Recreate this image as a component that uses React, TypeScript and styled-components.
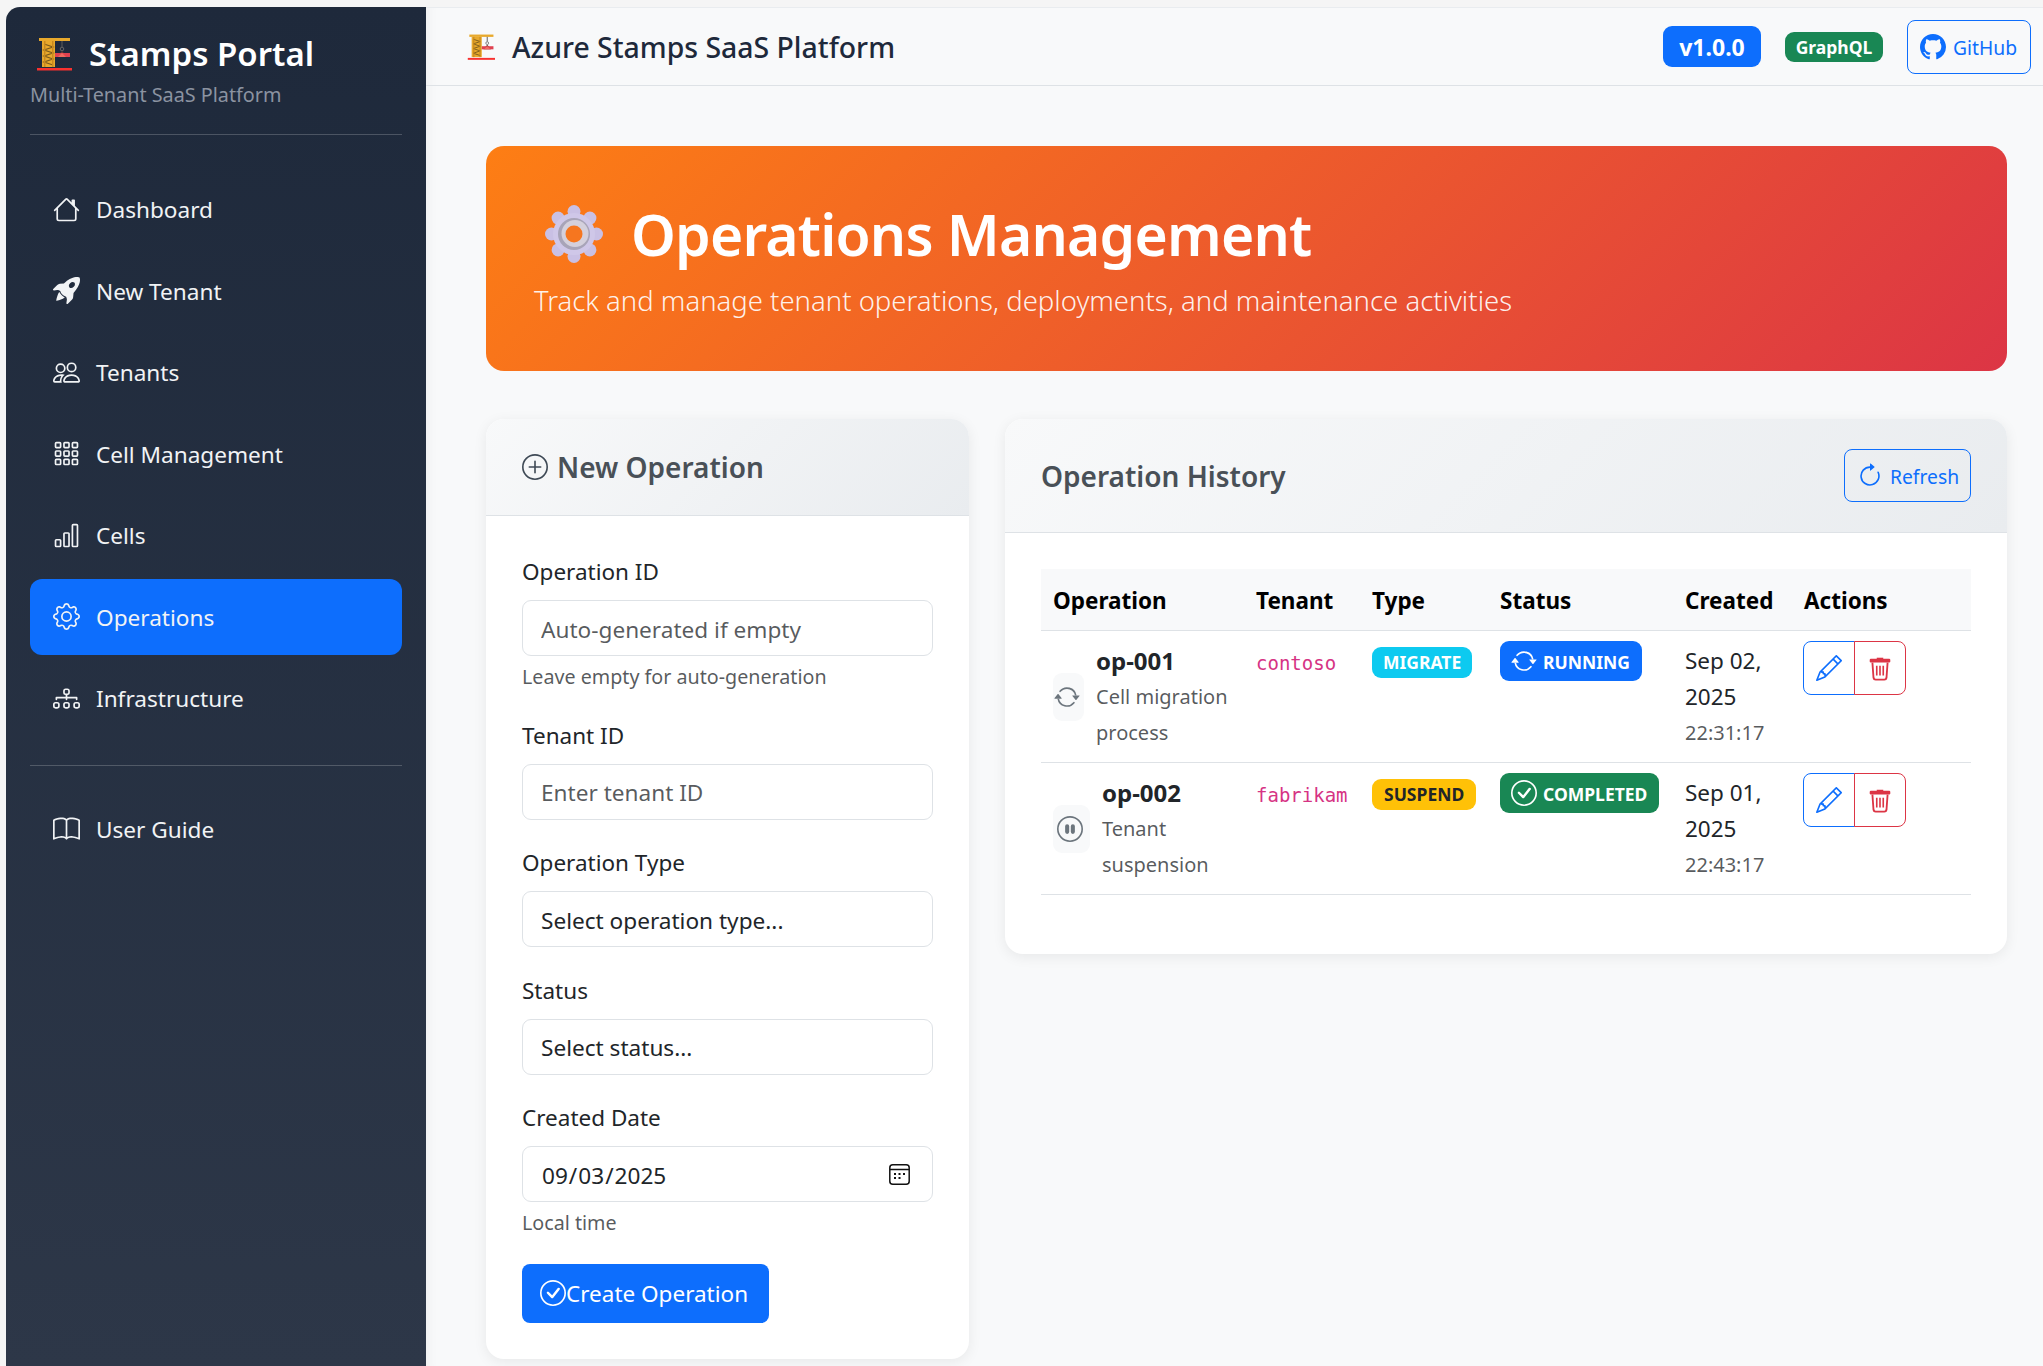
import styled, { createGlobalStyle } from "styled-components";
import {
  BsArrowClockwise,
  BsArrowRepeat,
  BsBarChart,
  BsBook,
  BsCheckCircle,
  BsDiagram3,
  BsGear,
  BsGithub,
  BsGrid3X3Gap,
  BsHouse,
  BsPauseCircle,
  BsPencil,
  BsPeople,
  BsPlusCircle,
  BsRocketTakeoffFill,
} from "react-icons/bs";

const FONT = `"Noto Sans", "Open Sans", sans-serif`;

const CALENDAR_ICON =
  "data:image/svg+xml,%3Csvg xmlns='http://www.w3.org/2000/svg' viewBox='0 0 21 21'%3E%3Crect x='.8' y='.8' width='19.4' height='19.4' rx='3' fill='none' stroke='%23111' stroke-width='1.5'/%3E%3Cpath d='M1 5.5h19' stroke='%23111' stroke-width='1.3'/%3E%3Cg fill='%23111'%3E%3Crect x='5' y='9' width='2' height='2'/%3E%3Crect x='9.5' y='9' width='2' height='2'/%3E%3Crect x='14' y='9' width='2' height='2'/%3E%3Crect x='5' y='13' width='2' height='2'/%3E%3Crect x='9.5' y='13' width='2' height='2'/%3E%3C/g%3E%3C/svg%3E";

const GlobalStyle = createGlobalStyle`
  * { box-sizing: border-box; }
  html, body { margin: 0; padding: 0; background: #f5f5f5; }
  body { font-family: ${FONT}; color: #212529; font-size: 22.5px; line-height: 36px; }
`;

const Page = styled.div`
  display: flex;
  height: 1366px;
  padding: 7px 0 0 6px;
  overflow: hidden;
`;

const Sidebar = styled.aside`
  width: 420px;
  flex-shrink: 0;
  padding: 24px;
  background: linear-gradient(180deg, #1e293b 0%, #2d3748 100%);
  border-top-left-radius: 14px;
  color: #fff;
`;

const Brand = styled.div`
  display: flex;
  align-items: center;
  gap: 17px;
  padding-left: 6px;
  font-size: 33px;
  line-height: 46px;
  font-weight: 600;
`;

const BrandSub = styled.div`
  margin-top: 3px;
  font-size: 19.8px;
  line-height: 30px;
  color: #8b93a1;
`;

const Divider = styled.hr`
  margin: ${(p: { $top: number; $bottom: number }) => `${p.$top}px 0 ${p.$bottom}px`};
  border: 0;
  border-top: 1px solid rgba(255, 255, 255, 0.2);
`;

const NavList = styled.nav`
  display: flex;
  flex-direction: column;
  gap: 5.5px;
`;

const NavItem = styled.a<{ $active?: boolean }>`
  display: flex;
  align-items: center;
  gap: 16px;
  height: 76px;
  padding: 2px 23px 0;
  border-radius: 12px;
  font-size: 22.6px;
  color: #f1f3f5;
  background: ${(p) => (p.$active ? "#0d6efd" : "transparent")};
  svg {
    width: 27px;
    height: 27px;
    flex-shrink: 0;
    margin-top: -2px;
  }
`;

const Main = styled.main`
  flex: 1;
  min-width: 0;
  background: #f8f9fa;
  box-shadow: inset 14px 0 14px -14px rgba(0, 0, 0, 0.06);
  border-top: 1px solid #e9ecef;
`;

const TopBar = styled.header`
  display: flex;
  align-items: center;
  height: 78px;
  padding: 0 12px 0 41px;
  border-bottom: 1px solid #dee2e6;
`;

const TopTitle = styled.div`
  display: flex;
  align-items: center;
  gap: 17px;
  flex: 1;
  font-size: 28.4px;
  font-weight: 500;
  color: #1e293b;
`;

const TopBadge = styled.span<{ $color: string; $big?: boolean }>`
  display: inline-flex;
  align-items: center;
  justify-content: center;
  width: 98px;
  height: ${(p) => (p.$big ? "41px" : "30px")};
  margin-right: 24px;
  border-radius: 9px;
  background: ${(p) => p.$color};
  color: #fff;
  font-weight: 700;
  font-size: ${(p) => (p.$big ? "23px" : "17.5px")};
`;

const OutlineButton = styled.a`
  display: inline-flex;
  align-items: center;
  gap: 7px;
  border: 1.3px solid #0d6efd;
  border-radius: 8px;
  color: #0d6efd;
  font-size: 19.3px;
  svg {
    width: 26px;
    height: 26px;
  }
`;

const ButtonText = styled.span`
  padding-top: 3px;
`;

const GithubButton = styled(OutlineButton)`
  height: 54px;
  width: 124px;
  padding-left: 12px;
`;

const RefreshButton = styled(OutlineButton)`
  height: 53px;
  width: 127px;
  padding-left: 12px;
`;

const Content = styled.div`
  padding: 60px 36px 0 60px;
`;

const Hero = styled.section`
  height: 225px;
  padding: 50px 48px 0;
  border-radius: 18px;
  background: linear-gradient(135deg, #fd7e14 0%, #dc3545 100%);
  color: #fff;
`;

const HeroTitle = styled.h1`
  display: flex;
  align-items: center;
  gap: 28px;
  margin: 0 0 0 11px;
  font-size: 57px;
  line-height: 76px;
  font-weight: 600;
  letter-spacing: -0.8px;
`;

const HeroText = styled.p`
  margin: 9px 0 0;
  font-size: 27.5px;
  line-height: 40px;
  font-weight: 300;
  color: rgba(255, 255, 255, 0.92);
`;

const Columns = styled.div`
  display: flex;
  align-items: flex-start;
  gap: 36px;
  margin-top: 48px;
`;

const Card = styled.section<{ $width?: string }>`
  flex: ${(p) => p.$width ?? "1"};
  border-radius: 18px;
  background: #fff;
  overflow: hidden;
  box-shadow: 0 3px 14px rgba(0, 0, 0, 0.07);
`;

const CardHead = styled.div<{ $height: number }>`
  display: flex;
  align-items: center;
  justify-content: space-between;
  height: ${(p) => p.$height}px;
  padding: 0 36px;
  background: linear-gradient(135deg, #f8f9fa 0%, #e9ecef 100%);
  border-bottom: 1px solid #dee2e6;
`;

const CardTitle = styled.h2`
  display: flex;
  align-items: center;
  gap: 9px;
  margin: 0;
  font-size: 28px;
  line-height: 40px;
  font-weight: 600;
  color: #495057;
  svg {
    width: 26px;
    height: 26px;
    color: #3f4a56;
  }
`;

const FormBody = styled.form`
  padding: 38px 36px 36px;
`;

const Field = styled.div`
  margin-bottom: 25.5px;
`;

const Label = styled.label`
  display: block;
  margin-bottom: 10px;
`;

const inputCss = `
  display: block;
  width: 100%;
  height: 56px;
  padding: 2px 22px 0 18px;
  border: 1.3px solid #dee2e6;
  border-radius: 9px;
  background: #fff;
  font-family: ${FONT};
  font-size: 22.6px;
  color: #212529;
  outline: none;
  appearance: none;
`;

const TextInput = styled.input`
  ${inputCss}
  &::placeholder {
    color: rgba(33, 37, 41, 0.75);
  }
  &::-webkit-calendar-picker-indicator {
    width: 21px;
    height: 21px;
    padding: 0;
    margin: -2px 0 0;
    background: url("${CALENDAR_ICON}") center / 21px 21px no-repeat;
  }
`;

const SelectInput = styled.select`
  ${inputCss}
`;

const Help = styled.div`
  margin-top: 6px;
  font-size: 19.7px;
  line-height: 30px;
  color: rgba(33, 37, 41, 0.75);
`;

const SubmitButton = styled.button`
  display: inline-flex;
  align-items: center;
  width: 247px;
  height: 59px;
  padding: 0 18px;
  border: 0;
  border-radius: 8px;
  background: #0d6efd;
  color: #fff;
  font-family: ${FONT};
  font-size: 22.5px;
  svg {
    width: 26px;
    height: 26px;
  }
`;

const TableWrap = styled.div`
  padding: 36px 36px 59px;
`;

const Table = styled.table`
  width: 100%;
  table-layout: fixed;
  border-collapse: collapse;
  th {
    height: 61px;
    padding: 3px 12px 0;
    text-align: left;
    font-weight: 700;
    font-size: 22.5px;
    color: #000;
    background: #f8f9fa;
    border-bottom: 1.3px solid #dee2e6;
  }
  td {
    padding: 12px 12px 10px;
    vertical-align: top;
    border-bottom: 1.3px solid #dee2e6;
  }
`;

const OpCell = styled.div`
  display: flex;
  align-items: center;
  gap: 12px;
`;

const OpIcon = styled.span<{ $width: number }>`
  display: flex;
  align-items: center;
  justify-content: center;
  flex-shrink: 0;
  width: ${(p) => p.$width}px;
  height: 48px;
  padding-right: 4px;
  border-radius: 9px;
  background: #f8f9fa;
  color: #6c757d;
  svg {
    width: 26px;
    height: 26px;
    flex-shrink: 0;
  }
`;

const OpName = styled.div`
  font-weight: 700;
  font-size: 24px;
  color: #212529;
`;

const Muted = styled.div`
  color: rgba(33, 37, 41, 0.75);
  font-size: 20px;
  line-height: 36.5px;
`;

const Code = styled.code`
  font-family: "DejaVu Sans Mono", monospace;
  font-size: 19px;
  line-height: 40px;
  color: #d63384;
`;

const Pill = styled.span<{ $bg: string; $fg?: string }>`
  display: inline-flex;
  align-items: center;
  gap: 6px;
  margin-top: 4px;
  height: 31px;
  padding: 0 ${(p) => (p.$fg ? "12px" : "11px")};
  border-radius: 9px;
  background: ${(p) => p.$bg};
  color: ${(p) => p.$fg ?? "#fff"};
  font-weight: 700;
  font-size: 17.5px;
`;

const StatusPill = styled(Pill)`
  margin-top: -2px;
  height: 40px;
  padding: 0 12px 0 11px;
  svg {
    width: 26px;
    height: 26px;
  }
`;

const DateText = styled.div`
  font-size: 22.5px;
`;

const ButtonGroup = styled.div`
  display: flex;
  width: 103px;
  margin: -2px 0 0 -1px;
`;

const IconButton = styled.span<{ $color: string; $first?: boolean }>`
  display: flex;
  align-items: center;
  justify-content: center;
  width: 52px;
  height: 54px;
  margin-left: ${(p) => (p.$first ? "0" : "-1px")};
  border: 1.3px solid ${(p) => p.$color};
  border-radius: ${(p) => (p.$first ? "8px 0 0 8px" : "0 8px 8px 0")};
  color: ${(p) => p.$color};
  svg {
    width: 26px;
    height: 26px;
  }
`;

const Crane = ({ size }: { size: number }) => (
  <svg width={size} height={size} viewBox="0 0 36 36" aria-hidden="true">
    <rect x="3" y="2" width="31" height="3" fill="#e8a92c" />
    <rect x="6" y="5" width="13" height="26" fill="#e8a92c" />
    <path d="M8 8l9 3-9 3 9 3-9 3 9 3-9 3 9 3" fill="none" stroke="#7a5a1c" strokeWidth="1.2" />
    <rect x="8" y="5" width="1.5" height="26" fill="#c98a1e" />
    <rect x="16" y="5" width="1.5" height="26" fill="#c98a1e" />
    <path d="M26 5v6" stroke="#555" strokeWidth="1.2" />
    <circle cx="26" cy="13" r="1.8" fill="none" stroke="#666" strokeWidth="1" />
    <path d="M21 21l5-6 5 6z" fill="#6b3a3a" />
    <rect x="19" y="17" width="15" height="4" fill="#e0414f" />
    <path d="M22 21l4-4 4 4z" fill="#f06a5e" />
    <rect x="1" y="32" width="35" height="2.5" fill="#f8312f" />
  </svg>
);

const HeroGear = () => (
  <svg width="58" height="58" viewBox="0 0 58 58" aria-hidden="true">
    {[0, 45, 90, 135, 180, 225, 270, 315].map((a) => (
      <ellipse key={a} cx="29" cy="6.5" rx="6.5" ry="6.5" fill="#c9c0e4" transform={`rotate(${a} 29 29)`} />
    ))}
    <circle cx="29" cy="29" r="21" fill="#cfc7e8" />
    <circle cx="29" cy="29" r="16" fill="#a8a4b8" />
    <circle cx="30" cy="28.5" r="13.5" fill="#d4d0dc" />
    <circle cx="29" cy="29" r="8.5" fill="#f6761f" />
  </svg>
);

const TrashIcon = () => (
  <svg viewBox="0 0 24 24" fill="none" aria-hidden="true">
    <path d="M9 2.5h6v2H9z" fill="currentColor" />
    <rect x="2.5" y="3.5" width="19" height="3.5" rx="1" fill="currentColor" />
    <path d="M5 7l1 14a2 2 0 0 0 2 1.7h8a2 2 0 0 0 2-1.7l1-14" stroke="currentColor" strokeWidth="1.7" />
    <path d="M9 10v9M12 10v9M15 10v9" stroke="currentColor" strokeWidth="1.5" />
  </svg>
);

const navItems = [
  { label: "Dashboard", icon: <BsHouse /> },
  { label: "New Tenant", icon: <BsRocketTakeoffFill /> },
  { label: "Tenants", icon: <BsPeople /> },
  { label: "Cell Management", icon: <BsGrid3X3Gap /> },
  { label: "Cells", icon: <BsBarChart /> },
  { label: "Operations", icon: <BsGear />, active: true },
  { label: "Infrastructure", icon: <BsDiagram3 /> },
];

const operations = [
  {
    id: "op-001",
    desc: "Cell migration process",
    icon: <BsArrowRepeat />,
    iconWidth: 31,
    tenant: "contoso",
    type: <Pill $bg="#0dcaf0">MIGRATE</Pill>,
    status: (
      <StatusPill $bg="#0d6efd">
        <BsArrowRepeat />
        <ButtonText>RUNNING</ButtonText>
      </StatusPill>
    ),
    date: "Sep 02, 2025",
    time: "22:31:17",
  },
  {
    id: "op-002",
    desc: "Tenant suspension",
    icon: <BsPauseCircle />,
    iconWidth: 37,
    tenant: "fabrikam",
    type: (
      <Pill $bg="#ffc107" $fg="#212529">
        SUSPEND
      </Pill>
    ),
    status: (
      <StatusPill $bg="#198754">
        <BsCheckCircle />
        <ButtonText>COMPLETED</ButtonText>
      </StatusPill>
    ),
    date: "Sep 01, 2025",
    time: "22:43:17",
  },
];

export default function App() {
  return (
    <>
      <GlobalStyle />
      <Page>
        <Sidebar>
          <Brand>
            <Crane size={36} />
            Stamps Portal
          </Brand>
          <BrandSub>Multi-Tenant SaaS Platform</BrandSub>
          <Divider $top={24} $bottom={36} />
          <NavList>
            {navItems.map((item) => (
              <NavItem key={item.label} $active={item.active}>
                {item.icon}
                {item.label}
              </NavItem>
            ))}
          </NavList>
          <Divider $top={29} $bottom={25} />
          <NavItem>
            <BsBook />
            User Guide
          </NavItem>
        </Sidebar>
        <Main>
          <TopBar>
            <TopTitle>
              <Crane size={28} />
              Azure Stamps SaaS Platform
            </TopTitle>
            <TopBadge $color="#0d6efd" $big>
              v1.0.0
            </TopBadge>
            <TopBadge $color="#198754">GraphQL</TopBadge>
            <GithubButton>
              <BsGithub />
              <ButtonText>GitHub</ButtonText>
            </GithubButton>
          </TopBar>
          <Content>
            <Hero>
              <HeroTitle>
                <HeroGear />
                Operations Management
              </HeroTitle>
              <HeroText>Track and manage tenant operations, deployments, and maintenance activities</HeroText>
            </Hero>
            <Columns>
              <Card $width="0 0 483px">
                <CardHead $height={97}>
                  <CardTitle>
                    <BsPlusCircle />
                    New Operation
                  </CardTitle>
                </CardHead>
                <FormBody>
                  <Field>
                    <Label>Operation ID</Label>
                    <TextInput placeholder="Auto-generated if empty" />
                    <Help>Leave empty for auto-generation</Help>
                  </Field>
                  <Field>
                    <Label>Tenant ID</Label>
                    <TextInput placeholder="Enter tenant ID" />
                  </Field>
                  <Field>
                    <Label>Operation Type</Label>
                    <SelectInput>
                      <option>Select operation type...</option>
                    </SelectInput>
                  </Field>
                  <Field>
                    <Label>Status</Label>
                    <SelectInput>
                      <option>Select status...</option>
                    </SelectInput>
                  </Field>
                  <Field>
                    <Label>Created Date</Label>
                    <TextInput type="date" defaultValue="2025-09-03" />
                    <Help>Local time</Help>
                  </Field>
                  <SubmitButton type="button">
                    <BsCheckCircle />
                    Create Operation
                  </SubmitButton>
                </FormBody>
              </Card>
              <Card>
                <CardHead $height={114}>
                  <CardTitle>Operation History</CardTitle>
                  <RefreshButton>
                    <BsArrowClockwise />
                    <ButtonText>Refresh</ButtonText>
                  </RefreshButton>
                </CardHead>
                <TableWrap>
                  <Table>
                    <colgroup>
                      <col style={{ width: 203 }} />
                      <col style={{ width: 116 }} />
                      <col style={{ width: 128 }} />
                      <col style={{ width: 185 }} />
                      <col style={{ width: 119 }} />
                      <col style={{ width: 179 }} />
                    </colgroup>
                    <thead>
                      <tr>
                        <th>Operation</th>
                        <th>Tenant</th>
                        <th>Type</th>
                        <th>Status</th>
                        <th>Created</th>
                        <th>Actions</th>
                      </tr>
                    </thead>
                    <tbody>
                      {operations.map((op) => (
                        <tr key={op.id}>
                          <td>
                            <OpCell>
                              <OpIcon $width={op.iconWidth}>{op.icon}</OpIcon>
                              <div>
                                <OpName>{op.id}</OpName>
                                <Muted>{op.desc}</Muted>
                              </div>
                            </OpCell>
                          </td>
                          <td>
                            <Code>{op.tenant}</Code>
                          </td>
                          <td>{op.type}</td>
                          <td>{op.status}</td>
                          <td>
                            <DateText>{op.date}</DateText>
                            <Muted>{op.time}</Muted>
                          </td>
                          <td>
                            <ButtonGroup>
                              <IconButton $color="#0d6efd" $first>
                                <BsPencil />
                              </IconButton>
                              <IconButton $color="#dc3545">
                                <TrashIcon />
                              </IconButton>
                            </ButtonGroup>
                          </td>
                        </tr>
                      ))}
                    </tbody>
                  </Table>
                </TableWrap>
              </Card>
            </Columns>
          </Content>
        </Main>
      </Page>
    </>
  );
}
